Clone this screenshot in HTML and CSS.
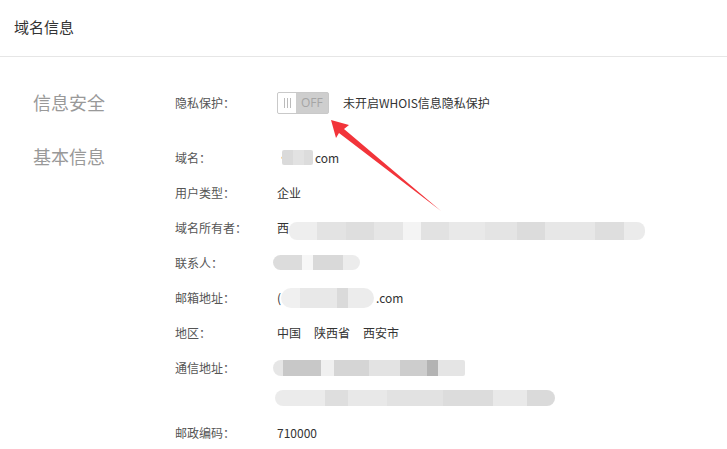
FILE: index.html
```html
<!DOCTYPE html>
<html lang="zh-CN">
<head>
<meta charset="utf-8">
<link rel="stylesheet" href="styles.css">
</head>
<body>
<div class="page">
  <div class="header">域名信息</div>
  <div class="content">
    <div class="section">
      <div class="section-title">信息安全</div>
      <div class="rows">
        <div class="row">
          <div class="label">隐私保护：</div>
          <div class="value">
            <span class="toggle"><span class="knob"><i></i><i></i><i></i></span><span class="off">OFF</span></span>
            <span class="toggle-text">未开启WHOIS信息隐私保护</span>
          </div>
        </div>
      </div>
    </div>
    <div class="section second">
      <div class="section-title">基本信息</div>
      <div class="rows">
        <div class="row">
          <div class="label">域名：</div>
          <div class="value"><span class="dot">·</span><span class="blur b-domain"></span><span>com</span></div>
        </div>
        <div class="row">
          <div class="label">用户类型：</div>
          <div class="value">企业</div>
        </div>
        <div class="row">
          <div class="label">域名所有者：</div>
          <div class="value"><span class="part">西</span><span class="blur b-owner"></span></div>
        </div>
        <div class="row">
          <div class="label">联系人：</div>
          <div class="value"><span class="blur b-contact"></span></div>
        </div>
        <div class="row">
          <div class="label">邮箱地址：</div>
          <div class="value"><span class="part">(</span><span class="blur b-mail"></span><span>.com</span></div>
        </div>
        <div class="row">
          <div class="label">地区：</div>
          <div class="value"><span class="area">中国</span><span class="area">陕西省</span><span class="area">西安市</span></div>
        </div>
        <div class="row tall">
          <div class="label">通信地址：</div>
          <div class="value stack">
            <div class="line"><span class="blur b-addr1"></span></div>
            <div class="line"><span class="blur b-addr2"></span></div>
          </div>
        </div>
        <div class="row">
          <div class="label">邮政编码：</div>
          <div class="value">710000</div>
        </div>
      </div>
    </div>
  </div>
  <svg class="arrow" width="727" height="449" viewBox="0 0 727 449">
    <polygon points="331,120 349,125 344,129 441,211 339,133 336,138" fill="#f2343a"/>
  </svg>
</div>
</body>
</html>
```
FILE: styles.css
```css
* { box-sizing: border-box; }
html, body { margin: 0; padding: 0; background: #fff; }
body {
  font-family: "Noto Sans CJK SC", "Microsoft YaHei", sans-serif;
  color: #333;
  font-size: 12px;
}
.page { position: relative; width: 727px; height: 449px; overflow: hidden; }
.header {
  height: 57px;
  line-height: 54px;
  padding-left: 14px;
  font-size: 15px;
  color: #333;
  border-bottom: 1px solid #e6e6e6;
}
.content { padding-top: 28px; }
.section { display: flex; }
.section.second { margin-top: 20px; }
.section-title {
  width: 175px;
  flex: none;
  padding-left: 33px;
  font-size: 18px;
  color: #999;
  line-height: 35px;
  margin-top: 0;
}
.section.second .section-title { margin-top: -1px; }
.rows { display: flex; flex-direction: column; }
.row { display: flex; height: 35px; align-items: center; }
.row.tall { height: 65px; align-items: flex-start; }
.row.tall .label { line-height: 35px; }
.label { width: 102px; flex: none; color: #555; }
.value { display: flex; align-items: center; color: #333; }
.stack { flex-direction: column; align-items: flex-start; }
.line { height: 25px; display: flex; align-items: center; }
.line:first-child { height: 35px; }
.toggle {
  display: inline-flex;
  width: 52px;
  height: 22px;
  border: 1px solid #c9c9c9;
  border-radius: 2px;
  background: #cecece;
  overflow: hidden;
}
.knob {
  width: 18px;
  height: 20px;
  background: #fff;
  display: flex;
  justify-content: center;
  align-items: center;
  gap: 2px;
}
.knob i { display: block; width: 1px; height: 10px; background: #bbb; }
.off {
  flex: 1;
  color: #a5a5a5;
  font-family: "Open Sans", "Noto Sans", sans-serif;
  font-size: 12px;
  line-height: 20px;
  padding-left: 5px;
}
.toggle-text { margin-left: 14px; }
.dot { color: #666; width: 5px; }
.part { display: inline-block; }
.blur { display: inline-block; border-radius: 8px; }
.b-domain {
  width: 31px; height: 15px; border-radius: 2px; margin-right: 2px;
  background: linear-gradient(90deg, #dadada 0 35%, #e2e2e2 35% 70%, #dcdcdc 70%);
}
.b-owner {
  width: 356px; height: 18px; margin-top: 6px;
  background: linear-gradient(90deg, #eeeeee 0 8%, #e3e3e3 8% 16%, #dedede 16% 24%, #e6e6e6 24% 32%, #f4f4f4 32% 37%, #e2e2e2 37% 45%, #e9e9e9 45% 55%, #e4e4e4 55% 64%, #dcdcdc 64% 72%, #e7e7e7 72% 86%, #dedede 86% 94%, #ebebeb 94%);
}
.b-contact {
  width: 87px; height: 15px; margin-left: -4px;
  background: linear-gradient(90deg, #dcdcdc 0 33%, #f7f7f7 33% 46%, #d9d9d9 46% 80%, #ececec 80%);
}
.b-mail {
  width: 93px; height: 20px; margin-right: 2px; border-radius: 10px;
  background: linear-gradient(90deg, #f0f0f0 0 20%, #e8e8e8 20% 60%, #dadada 60% 72%, #ececec 72%);
}
.b-addr1 {
  width: 192px; height: 16px; margin-left: -4px; border-radius: 8px 2px 2px 8px;
  background: linear-gradient(90deg, #e6e6e6 0 5%, #c8c8c8 5% 25%, #f0f0f0 25% 32%, #d5d5d5 32% 50%, #e3e3e3 50% 66%, #cdcdcd 66% 80%, #b3b3b3 80% 86%, #e5e5e5 86%);
}
.b-addr2 {
  width: 280px; height: 16px; margin-left: -2px;
  background: linear-gradient(90deg, #ebebeb 0 18%, #dedede 18% 26%, #e8e8e8 26% 40%, #e2e2e2 40% 60%, #dcdcdc 60% 78%, #e9e9e9 78% 90%, #dadada 90%);
}
.area { margin-right: 13px; }
.arrow { position: absolute; left: 0; top: 0; pointer-events: none; }
```
